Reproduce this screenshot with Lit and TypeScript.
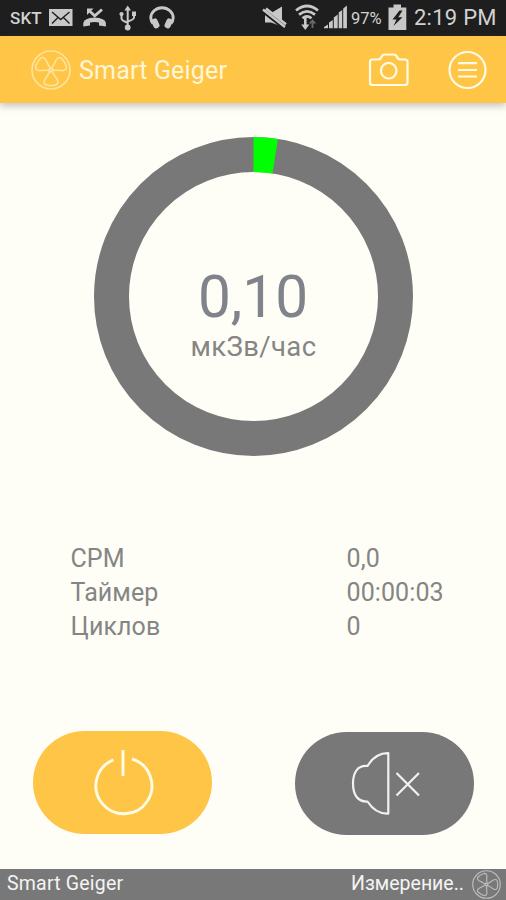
import { LitElement, html, css, svg } from "lit";
import { customElement, property } from "lit/decorators.js";

@customElement("status-bar")
class StatusBar extends LitElement {
  static styles = css`
    :host {
      display: grid;
      grid-template-columns: 38px 32px 34px 30px 36px 1fr 34px 30px 28px 36px 27px 93px;
      height: 36px;
      padding-left: 10px;
      background: #1e1e1e;
      color: #d2d2d2;
      font-family: Roboto, sans-serif;
      white-space: nowrap;
    }
    svg { display: block; width: 100%; height: 36px; fill: #c8c8c8; stroke: none; }
    .line { fill: none; stroke: #c8c8c8; }
    .dark { fill: none; stroke: #1e1e1e; }
    .bolt { fill: #1e1e1e; }
    .dim { fill: none; stroke: #6a6a6a; }
    .carrier { font-size: 17px; font-weight: 500; line-height: 37px; letter-spacing: 0.1px; }
    .percent { font-size: 16.5px; line-height: 37px; padding-left: 1px; letter-spacing: 0; }
    .time { font-size: 22px; line-height: 36px; padding-left: 1px; letter-spacing: 0.25px; }
  `;
  render() {
    return html`
      <span class="carrier">SKT</span>
      <svg viewBox="48 0 32 36">
        <rect x="49" y="9" width="23.5" height="17" />
        <path class="dark" stroke-width="1.4" d="M52 12 L60.7 19.5 L69.5 12 M52 23.5 L58 17.5 M69.5 23.5 L63.5 17.5" />
      </svg>
      <svg viewBox="80 0 34 36">
        <path d="M83.3 26.5 V23 Q84 18.2 94.5 17.6 Q105.2 18.2 105.9 23 V26.5 L99 25.6 V22.6 Q94.5 21.6 90 22.600 V25.6 Z" />
        <path class="line" stroke-width="2.8" d="M102 9.500 L94.800 15.800 L89.500 11" />
        <path d="M87 8.500 H93.500 L87 15 Z" />
      </svg>
      <svg viewBox="114 0 30 36">
        <path d="M127.700 5.500 L131 10.500 H124.400 Z" />
        <circle cx="127.700" cy="27.500" r="2.900" />
        <path class="line" stroke-width="2" d="M127.700 9 V26 M121.500 15 V18.500 Q121.500 20.500 127.700 22.700 M134 14 V17.500 Q134 19.500 127.700 21.500" />
        <circle cx="121.500" cy="14" r="2.100" /><rect x="132" y="11.500" width="4" height="4.500" />
      </svg>
      <svg viewBox="144 0 36 36">
        <path class="line" stroke-width="2.900" d="M153 23.500 Q151 21.500 150.800 18 A11.200 10.200 0 0 1 173.200 18 Q173 21.500 171 23.500" />
        <rect x="152.400" y="18.400" width="6.200" height="10" rx="2.600" transform="rotate(-24 155.500 23.500)" />
        <rect x="165.400" y="18.400" width="6.200" height="10" rx="2.600" transform="rotate(24 168.500 23.500)" />
      </svg>
      <span></span>
      <svg viewBox="258 0 34 36">
        <path d="M265 12.500 H272 L282 6.500 V26.500 L271 22.500 H265 Z" />
        <path class="dark" stroke-width="6.400" d="M262 8.700 L286 27.500" />
        <path class="line" stroke-width="2.400" d="M263 9.500 L285 27 M266 8.500 L286 24.300" />
      </svg>
      <svg viewBox="292 0 30 36">
        <path class="line" stroke-width="2.700" d="M296 10.500 Q307 1.500 318 10.500 M299 14.600 Q307 8 315 14.600 M302.500 18.300 Q307 14.500 311.500 18.300" />
        <path d="M304 18 h2.600 v6.500 h2.800 l-4.100 5.500 -4.100 -5.500 h2.800 z" />
        <path class="dim" stroke-width="1.800" d="M312.500 28 V21.500 M309.800 23.500 L312.500 20.500 L315.200 23.500" />
      </svg>
      <svg viewBox="322 0 28 36">
        <path d="M324 28.300 V27 L328 24.500 V28.300 Z M329 28.300 V22.500 L332.800 20 V28.300 Z M333.800 28.300 V17.500 L337.700 14.500 V28.300 Z M338.700 28.300 V12.500 L342.200 10 V28.300 Z M343.200 28.300 V8.500 L346.900 5.500 V28.300 Z" />
      </svg>
      <span class="percent">97%</span>
      <svg viewBox="386 0 27 36">
        <path d="M393.500 4.500 H401 V7.500 H406.300 V30 H388.500 V7.500 H393.500 Z" />
        <path class="bolt" d="M399.500 10.500 L392.500 19.500 H396.500 L393.500 26 L402.500 17.300 H398.300 L402.500 10.500 Z" />
      </svg>
      <span class="time">2:19 PM</span>
    `;
  }
}

@customElement("trefoil-icon")
class TrefoilIcon extends LitElement {
  @property({ type: Number }) turn = 0;
  static styles = css`
    :host { display: block; }
    svg { display: block; width: 100%; height: 100%; fill: none; stroke: currentColor; stroke-width: 1.6; stroke-linejoin: round; }
  `;
  render() {
    const leaf = (a: number) => svg`<path transform="rotate(${a} 20 20)" d="M18.300 22 Q17.500 24.500 13.800 29.500 Q11.500 34.500 16.500 35.200 Q20 35.700 23.500 35.200 Q28.500 34.500 26.200 29.500 Q22.500 24.500 21.700 22 Q20 20.800 18.300 22 Z" />`;
    return html`<svg viewBox="0 0 40 40">
      <circle cx="20" cy="20" r="19" />
      ${[0, 120, 240].map((a) => leaf(a + this.turn))}
      <circle cx="20" cy="20" r="1.800" />
    </svg>`;
  }
}

@customElement("dose-ring")
class DoseRing extends LitElement {
  @property({ type: Number }) degrees = 8.8;
  static styles = css`
    :host { display: grid; width: 320px; height: 320px; font-family: Roboto, sans-serif; color: #80838a; }
    svg, .reading { grid-area: 1 / 1; }
    svg { width: 320px; height: 320px; fill: none; stroke-width: 35; }
    .track { stroke: #787878; }
    .level { stroke: #00ff00; }
    .reading { display: flex; flex-direction: column; align-items: center; padding-top: 125px; }
    .value { font-size: 58.5px; line-height: 70px; margin-right: 2px; }
    .unit { font-size: 27.5px; line-height: 30px; color: #858585; letter-spacing: 0.35px; margin-right: 1px; }
  `;
  render() {
    const a = (this.degrees * Math.PI) / 180;
    const x = 159.5 + 142 * Math.sin(a);
    const y = 159.5 - 142 * Math.cos(a);
    return html`
      <svg viewBox="0 0 320 320">
        <circle class="track" cx="159.500" cy="159.500" r="142" />
        <path class="level" d="M159.500 17.500 A142 142 0 0 1 ${x} ${y}" />
      </svg>
      <div class="reading">
        <span class="value">0,10</span>
        <span class="unit">мкЗв/час</span>
      </div>
    `;
  }
}

@customElement("app-root")
class AppRoot extends LitElement {
  static styles = css`
    :host {
      display: flex;
      flex-direction: column;
      width: 506px;
      height: 900px;
      overflow: hidden;
      background: #fefef6;
      font-family: Roboto, sans-serif;
      white-space: nowrap;
    }
    header {
      display: flex;
      align-items: center;
      height: 67px;
      padding: 0 18px 0 31px;
      box-sizing: border-box;
      background: #ffc547;
      box-shadow: 0 3px 7px rgba(90, 90, 80, 0.35);
      color: #fff6d8;
    }
    .logo { width: 40px; height: 40px; color: #ffe49b; }
    .title { flex: 1; padding: 3px 0 0 8px; font-size: 25px; line-height: 30px; letter-spacing: 0.18px; }
    .camera { width: 42px; height: 36px; margin-right: 38px; }
    .menu { width: 40px; height: 40px; }
    svg { display: block; fill: none; stroke: #fffbe6; stroke-width: 2.200; stroke-linejoin: round; }
    main { flex: 1; display: flex; flex-direction: column; }
    dose-ring { margin: 34px 0 0 94px; }
    .stats {
      display: grid;
      grid-template-columns: 276px auto;
      grid-auto-rows: 34px;
      margin: 85px 0 0 70.500px;
      font-size: 25px;
      line-height: 34px;
      letter-spacing: 0.1px;
      color: #858585;
    }
    .actions { display: flex; justify-content: space-between; margin: 87px 32px 0 33px; }
    .action { width: 179px; height: 103px; padding: 0; border: 0; border-radius: 52px; }
    .power { background: #ffc547; }
    .mute { background: #787878; margin-top: 1px; }
    .action svg { width: 179px; height: 103px; }
    .power svg { stroke-width: 2.900; }
    .mute svg { stroke: #f2f2f2; }
    footer {
      display: flex;
      align-items: center;
      height: 31px;
      padding: 0 5px 0 7px;
      background: #787878;
      color: #f4f4f4;
      font-size: 19.500px;
      line-height: 28px;
    }
    footer .name { flex: 1; letter-spacing: 0.2px; }
    footer span { margin-top: -2px; }
    footer trefoil-icon { width: 29px; height: 29px; margin-left: 8px; color: #bcbcbc; }
  `;
  render() {
    const rows = [["CPM", "0,0"], ["Таймер", "00:00:03"], ["Циклов", "0"]];
    return html`
      <status-bar></status-bar>
      <header>
        <trefoil-icon class="logo"></trefoil-icon>
        <span class="title">Smart Geiger</span>
        <svg class="camera" viewBox="368 52 42 36">
          <path d="M372 59.500 H377.500 Q380.500 59.500 381.500 57 Q382.500 54.500 385 54.500 H393.500 Q396 54.500 397 57 Q398 59.500 401 59.500 H405 Q407.500 59.500 407.500 62 V82.500 Q407.500 85 405 85 H372.500 Q370 85 370 82.500 V62 Q370 59.500 372 59.500 Z" />
          <circle cx="388.700" cy="70.700" r="7.800" />
        </svg>
        <svg class="menu" viewBox="0 0 40 40">
          <circle cx="19.500" cy="20" r="18" />
          <path d="M10 13.200 H29 M10 20 H29 M10 26.500 H29" />
        </svg>
      </header>
      <main>
        <dose-ring></dose-ring>
        <div class="stats">
          ${rows.map(([k, v]) => html`<span>${k}</span><span>${v}</span>`)}
        </div>
        <div class="actions">
          <button class="action power" aria-label="Power">
            <svg viewBox="33 731 179 103">
              <path d="M123 750 V776" />
              <path d="M113.500 759.800 A28 28 0 1 0 132 759" />
            </svg>
          </button>
          <button class="action mute" aria-label="Mute">
            <svg viewBox="295 732 179 103">
              <path d="M388.300 753.200 V813.600 C380 814 373 810 367.500 801.500 C358 802 353 795 353 783.500 C353 772 358 765 367.500 766 C373 757 380 753 388.300 753.200 Z" />
              <path d="M396.500 773 L419 795.500 M419 773 L396.500 795.500" />
            </svg>
          </button>
        </div>
      </main>
      <footer>
        <span class="name">Smart Geiger</span>
        <span>Измерение..</span>
        <trefoil-icon turn="30"></trefoil-icon>
      </footer>
    `;
  }
}
